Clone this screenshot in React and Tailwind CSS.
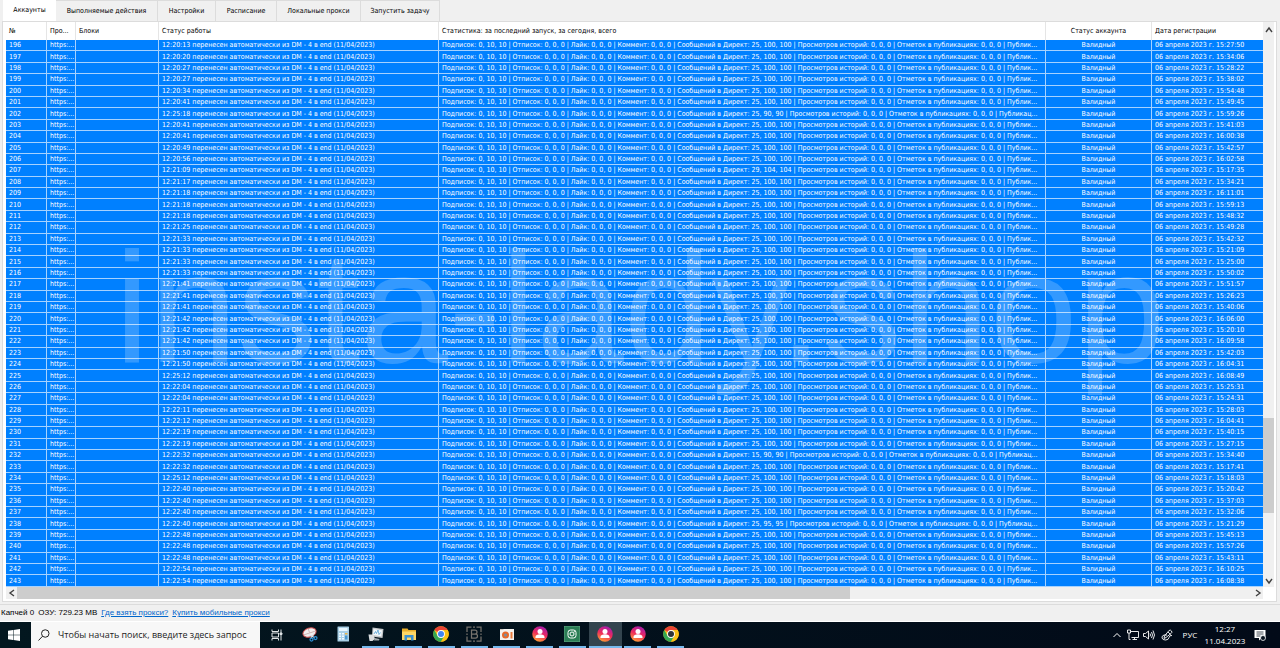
const TABS = [
  { label: 'Аккаунты', width: 'w-[53px]' },
  { label: 'Выполняемые действия', width: 'w-[102px]' },
  { label: 'Настройки', width: 'w-[58px]' },
  { label: 'Расписание', width: 'w-[61px]' },
  { label: 'Локальные прокси', width: 'w-[84px]' },
  { label: 'Запустить задачу', width: 'w-[79px]' }
];

const FIRST_ID = 196;

// [status time, registration time, messages counters]
const ACCOUNTS = [
  ['12:20:13', '15:27:50'],
  ['12:20:20', '15:34:06'],
  ['12:20:27', '15:28:22'],
  ['12:20:27', '15:38:02'],
  ['12:20:34', '15:54:48'],
  ['12:20:41', '15:49:45'],
  ['12:25:18', '15:59:26', '25, 90, 90'],
  ['12:20:41', '15:41:03'],
  ['12:20:41', '16:00:38'],
  ['12:20:49', '15:42:57'],
  ['12:20:56', '16:02:58'],
  ['12:21:09', '15:17:35', '29, 104, 104'],
  ['12:21:17', '15:34:21'],
  ['12:21:18', '16:11:01'],
  ['12:21:18', '15:59:13'],
  ['12:21:18', '15:48:32'],
  ['12:21:25', '15:49:28'],
  ['12:21:33', '15:42:32'],
  ['12:21:33', '15:21:09'],
  ['12:21:33', '15:25:00'],
  ['12:21:33', '15:50:02'],
  ['12:21:41', '15:51:57'],
  ['12:21:41', '15:26:23'],
  ['12:21:41', '15:40:06'],
  ['12:21:42', '16:06:00'],
  ['12:21:42', '15:20:10'],
  ['12:21:42', '16:09:58'],
  ['12:21:50', '15:42:03'],
  ['12:21:50', '16:04:31'],
  ['12:25:12', '16:08:49'],
  ['12:22:04', '15:25:31'],
  ['12:22:04', '15:24:31'],
  ['12:22:11', '15:28:03'],
  ['12:22:12', '16:04:41'],
  ['12:22:19', '15:40:15'],
  ['12:22:19', '15:27:15'],
  ['12:22:32', '15:34:40', '15, 90, 90'],
  ['12:22:32', '15:17:41'],
  ['12:25:12', '15:18:03'],
  ['12:22:40', '15:20:42'],
  ['12:22:40', '15:37:03'],
  ['12:22:40', '15:32:06'],
  ['12:22:40', '15:21:29', '25, 95, 95'],
  ['12:22:48', '15:45:13'],
  ['12:22:48', '15:57:26'],
  ['12:22:48', '15:43:11'],
  ['12:22:54', '16:10:25'],
  ['12:22:54', '16:08:38']
];

function statsText(messages = '25, 100, 100') {
  const tail = messages.length < 12 ? 'Публикац...' : 'Публик...';
  return `Подписок: 0, 10, 10 | Отписок: 0, 0, 0 | Лайк: 0, 0, 0 | Коммент: 0, 0, 0 | Сообщений в Директ: ${messages} | Просмотров историй: 0, 0, 0 | Отметок в публикациях: 0, 0, 0 | ${tail}`;
}

const CELL = 'border-r border-b border-[#a6d2ff] p-0 pl-[3px] overflow-hidden whitespace-nowrap';
const HEAD = 'border-r border-[#e5e5e5] p-0 pl-[3px] text-left font-normal overflow-hidden whitespace-nowrap';

function AccountsTable() {
  return (
    <table className="h-full w-full table-fixed border-separate border-spacing-0 leading-[10px]">
      <colgroup>
        <col className="w-[41px]" />
        <col className="w-[29px]" />
        <col className="w-[83px]" />
        <col className="w-[280px]" />
        <col />
        <col className="w-[106px]" />
        <col className="w-[111px]" />
      </colgroup>
      <thead>
        <tr className="h-[18px]">
          <th className={HEAD}>№</th>
          <th className={HEAD}>Про...</th>
          <th className={HEAD}>Блоки</th>
          <th className={HEAD}>Статус работы</th>
          <th className={HEAD}>Статистика: за последний запуск, за сегодня, всего</th>
          <th className="border-r border-[#e5e5e5] p-0 text-center font-normal">Статус аккаунта</th>
          <th className="p-0 pl-[3px] text-left font-normal">Дата регистрации</th>
        </tr>
      </thead>
      <tbody className="bg-[#0080ff] text-white">
        {ACCOUNTS.map(([time, registered, messages], i) => (
          <tr key={i}>
            <td className={CELL}>{FIRST_ID + i}</td>
            <td className={CELL}>https:...</td>
            <td className={CELL}></td>
            <td className={CELL}>{time} перенесен автоматически из DM - 4 в end (11/04/2023)</td>
            <td className={CELL}>{statsText(messages)}</td>
            <td className="border-r border-b border-[#a6d2ff] p-0 text-center">Валидный</td>
            <td className="border-b border-[#a6d2ff] p-0 pl-[3px] whitespace-nowrap">06 апреля 2023 г. {registered}</td>
          </tr>
        ))}
      </tbody>
    </table>
  );
}

function Arrow({ d }) {
  return (
    <svg viewBox="0 0 8 8" className="h-2 w-2" fill="none" stroke="#404040" strokeWidth="1.4">
      <path d={d} />
    </svg>
  );
}

function ChromeIcon({ center = '#4285f4' }) {
  return (
    <svg viewBox="0 0 32 32" className="h-4 w-4">
      <circle cx="16" cy="16" r="15.5" fill="#fbc116" />
      <path d="M16 16 2.6 8.2A15.5 15.5 0 0 1 29.4 8.2H16Z" fill="#ea4335" />
      <path d="M2.6 8.2A15.5 15.5 0 0 0 16 31.5L22.8 19.8 16 16 9.2 19.8Z" fill="#34a853" />
      <path d="M16 8.2h13.4A15.5 15.5 0 0 1 16 31.5l6.8-11.7Z" fill="#fbc116" />
      <circle cx="16" cy="16" r="7.8" fill="#fff" />
      <circle cx="16" cy="16" r="6" fill={center} />
    </svg>
  );
}

function PersonIcon({ id }) {
  return (
    <svg viewBox="0 0 32 32" className="h-4 w-4">
      <defs>
        <linearGradient id={id} x1="0.7" y1="0" x2="0.3" y2="1">
          <stop offset="0" stopColor="#a31bb0" />
          <stop offset="0.5" stopColor="#ee2a5c" />
          <stop offset="1" stopColor="#ffa033" />
        </linearGradient>
      </defs>
      <circle cx="16" cy="16" r="15.5" fill={`url(#${id})`} />
      <circle cx="16" cy="11" r="5" fill="#fff" />
      <path d="M7 24v-2c0-4 4-5.500 9-5.500s9 1.500 9 5.500v2Z" fill="#fff" />
    </svg>
  );
}

function SnipIcon() {
  return (
    <svg viewBox="0 0 32 32" className="h-4 w-4">
      <g transform="rotate(-18 15 13)">
        <ellipse cx="15" cy="13" rx="13.500" ry="9" fill="#f3eeee" stroke="#c94b4b" strokeWidth="2" />
        <path d="M3 14h23M15 5v8" stroke="#c3a5a5" strokeWidth="1.500" />
      </g>
      <path d="m13 17 12 6M25 14l-7 10" stroke="#d8e3ea" strokeWidth="2.500" />
      <circle cx="27" cy="24" r="3" fill="none" stroke="#2d8fd5" strokeWidth="2.500" />
      <circle cx="19" cy="27" r="3" fill="none" stroke="#2d8fd5" strokeWidth="2.500" />
    </svg>
  );
}

function CalcIcon() {
  return (
    <svg viewBox="0 0 32 32" className="h-4 w-4">
      <rect x="5" y="1" width="23" height="30" rx="1" fill="#a9cfe6" />
      <rect x="8" y="4" width="17" height="6" fill="#e8f7ff" />
      <path d="M8 14h4v3H8zm6 0h4v3h-4zM8 19h4v3H8zm6 0h4v3h-4zM8 24h4v3H8zm6 0h4v3h-4z" fill="#f1faff" />
      <path d="M20 14h5v3h-5z" fill="#e8b54a" />
      <path d="M20 19h5v8h-5z" fill="#4998d0" />
    </svg>
  );
}

function MonitorIcon() {
  return (
    <svg viewBox="0 0 32 32" className="h-4 w-4">
      <path d="M9 3 31 6l-2 18-21-3Z" fill="#c5c9cc" />
      <path d="m11 6 17 2.500-1.500 12L10 18Z" fill="#f2f8fb" />
      <path d="m12 16 3-5 2 4 3-7 2 9 3-4" fill="none" stroke="#4b9bd0" strokeWidth="1.500" />
      <path d="M1 17h10l3 9-5 4H3Z" fill="#dadddf" />
      <path d="m14 24 9 2-1 3H12Z" fill="#9ea6aa" />
    </svg>
  );
}

function FolderIcon() {
  return (
    <svg viewBox="0 0 32 32" className="h-4 w-4">
      <path d="M2 5h11l2 3h15v20H2Z" fill="#e9ae2b" />
      <path d="M2 11h28v17H2Z" fill="#ffd765" />
      <path d="M7 18h18v11h-5v-6h-8v6H7Z" fill="#3c91d0" />
    </svg>
  );
}

function BracketIcon() {
  return (
    <svg viewBox="0 0 32 32" className="h-4 w-4" fill="none" stroke="#77736d" strokeWidth="2.500">
      <path d="M2 12V2h9M14 2h4M21 2h9v10M30 15v3M30 21v9h-9M18 30h-4M11 30H2v-9M2 18v-3" />
      <path d="M11 8h7a4 4 0 0 1 0 8h-7Zm0 8h8a4 4 0 0 1 0 8h-8Z" />
    </svg>
  );
}

function RecorderIcon() {
  return (
    <svg viewBox="0 0 32 32" className="h-4 w-4">
      <path d="M2 6h28v22H2Z" fill="#f4f2ef" />
      <circle cx="13" cy="18" r="7" fill="#e76829" />
      <circle cx="13" cy="18" r="3" fill="#7a8fa0" />
      <path d="M23 12h4v13h-4Z" fill="#e87b3d" />
      <path d="M2 6h7v2H2Z" fill="#cfcac2" />
    </svg>
  );
}

function CameraIcon() {
  return (
    <svg viewBox="0 0 32 32" className="h-4 w-4" fill="none" stroke="#fff" strokeWidth="2">
      <path d="M0 0h32v32H0Z" fill="#2b7d55" stroke="#60a883" />
      <rect x="8" y="8" width="16" height="16" rx="5" />
      <circle cx="16" cy="16" r="4" />
      <circle cx="20.500" cy="11.500" r="0.500" />
    </svg>
  );
}

const APPS = [
  { name: 'Ножницы', icon: <SnipIcon /> },
  { name: 'Калькулятор', icon: <CalcIcon /> },
  { name: 'Монитор ресурсов', icon: <MonitorIcon />, running: true },
  { name: 'Проводник', icon: <FolderIcon />, running: true },
  { name: 'Chrome', icon: <ChromeIcon />, running: true },
  { name: 'Редактор', icon: <BracketIcon />, running: true },
  { name: 'Запись экрана', icon: <RecorderIcon />, running: true },
  { name: 'Аккаунты 1', icon: <PersonIcon id="person-1" />, running: true },
  { name: 'Камера', icon: <CameraIcon />, running: true },
  { name: 'Аккаунты 2', icon: <PersonIcon id="person-2" />, running: true, active: true },
  { name: 'Аккаунты 3', icon: <PersonIcon id="person-3" />, running: true },
  { name: 'Chrome 2', icon: <ChromeIcon center="#303438" />, running: true }
];

function Taskbar() {
  return (
    <footer className="flex h-[26px] shrink-0 items-stretch bg-linear-to-r from-[#03171f] to-[#020a18] font-['Open_Sans','Noto_Sans',sans-serif] text-white">
      <button type="button" aria-label="Пуск" className="flex w-[31px] items-center justify-center pr-1">
        <svg viewBox="0 0 24 24" className="h-3 w-3" fill="#fff">
          <path d="M0 3.500 10 2v9.500H0ZM11 1.900 24 0v11.500H11ZM0 12.500h10V22L0 20.500ZM11 12.500h13V24l-13-1.900Z" />
        </svg>
      </button>
      <label className="flex w-[229px] items-center gap-2 bg-[#f7f7f7] pl-[7px] text-[#222]">
        <svg viewBox="0 0 24 24" className="h-3 w-3 shrink-0" fill="none" stroke="#222" strokeWidth="2">
          <circle cx="14.500" cy="9" r="7.500" />
          <path d="M9 14.500 1 23" />
        </svg>
        <input
          aria-label="Поиск"
          placeholder="Чтобы начать поиск, введите здесь запрос"
          className="w-full min-w-0 bg-transparent text-[9px] outline-none placeholder:text-[#222]"
        />
      </label>
      <button type="button" aria-label="Представление задач" className="flex w-[34px] items-center justify-center">
        <svg viewBox="0 0 24 24" className="h-3 w-3" fill="none" stroke="#dfe4e6" strokeWidth="2">
          <path d="M2 1v4h13V1M2 23v-4h13v4M2 8h13v8H2ZM20 1v22" />
          <path d="M18 8h4v3h-4Z" fill="#dfe4e6" />
        </svg>
      </button>
      <nav className="flex w-[393px]">
        {APPS.map((app) => (
          <button
            key={app.name}
            type="button"
            aria-label={app.name}
            className={'flex flex-1 flex-col items-center ' + (app.active ? 'bg-[#33444e]' : '')}
          >
            <span className="flex flex-1 items-center">{app.icon}</span>
            <span
              className={
                'h-0.5 ' + (app.active ? 'w-full ' : 'w-[27px] ') + (app.running ? 'bg-[#76b9ed]' : '')
              }
            />
          </button>
        ))}
      </nav>
      <div className="ml-auto flex items-center">
        <button type="button" aria-label="Скрытые значки" className="flex w-4 justify-center">
          <svg viewBox="0 0 16 16" className="h-2 w-2" fill="none" stroke="#fff" strokeWidth="2">
            <path d="m1 12 7-7 7 7" />
          </svg>
        </button>
        <button type="button" aria-label="Сеть" className="flex w-4 justify-center">
          <svg viewBox="0 0 24 24" className="h-3 w-3" fill="none" stroke="#fff" strokeWidth="1.800">
            <path d="M8 5h15v12H9M1 2h6v6H1ZM4 8v13h3M11 21h9M15 17v4" />
          </svg>
        </button>
        <button type="button" aria-label="Громкость" className="flex w-4 justify-center">
          <svg viewBox="0 0 24 24" className="h-3 w-3" fill="none" stroke="#fff" strokeWidth="1.800">
            <path d="M1 9h4l6-5v16l-6-5H1ZM14 9q2 3 0 6M17 6q4 6 0 12M20 3q6 9 0 18" />
          </svg>
        </button>
        <button type="button" aria-label="Перо" className="flex w-5 justify-center">
          <svg viewBox="0 0 24 24" className="h-3 w-3" fill="none" stroke="#fff" strokeWidth="1.800">
            <path d="m7 14 9-11q3-2 5 1t-1 5L10 17l-4 2ZM14 6l5 5M12 12H6q-5 2-4 6t7 4 7-5 6-4" />
          </svg>
        </button>
        <button type="button" className="w-[26px] text-center text-[8px]">РУС</button>
        <time className="w-11 text-center text-[8px] leading-3">
          12:27
          <br />
          11.04.2023
        </time>
        <button type="button" aria-label="Уведомления" className="mr-[7px] flex w-[26px] justify-center">
          <svg viewBox="0 0 24 24" className="h-3 w-3">
            <path d="M1 2h22v16h-8l-5 5v-5H1Z" fill="#fff" />
            <path d="M5 6h14M5 10h14M5 14h8" stroke="#07121e" strokeWidth="1.500" />
            <circle cx="18" cy="18" r="5" fill="#07121e" stroke="#fff" strokeWidth="1.500" />
          </svg>
        </button>
      </div>
    </footer>
  );
}

export default function App() {
  return (
    <div className="flex h-screen flex-col overflow-hidden bg-[#f0f0f0] font-['DejaVu_Sans_Condensed',Roboto,sans-serif] text-[7px] text-black">
      <main className="relative flex min-h-0 flex-1 flex-col">
        <div role="tablist" className="flex h-[21px] shrink-0 pl-[3px]">
          {TABS.map((tab, i) => (
            <button
              key={tab.label}
              type="button"
              role="tab"
              aria-selected={i === 0}
              className={
                'whitespace-nowrap ' +
                tab.width +
                (i === 0 ? ' bg-white' : ' border-t border-r border-[#dcdcdc]')
              }
            >
              {tab.label}
            </button>
          ))}
        </div>

        <section className="mr-[3px] ml-0.5 flex min-h-0 flex-1 flex-col border border-[#dcdcdc] bg-white pr-0.5 pb-0.5 pl-[3px]">
          <div className="flex min-h-0 flex-1">
            <div className="min-w-0 flex-1">
              <AccountsTable />
            </div>
            <div className="flex w-[11px] flex-col items-center bg-[#f0f0f0]">
              <button type="button" aria-label="Вверх" className="flex h-4 items-center">
                <Arrow d="m1 6 3-4 3 4" />
              </button>
              <div className="flex-[380]" />
              <div className="w-full flex-[95] bg-[#cdcdcd]" />
              <div className="flex-[62]" />
              <button type="button" aria-label="Вниз" className="flex h-3 items-center">
                <Arrow d="m1 2 3 4 3-4" />
              </button>
            </div>
          </div>
          <div className="mr-[11px] flex h-3 items-center bg-[#f0f0f0]">
            <button type="button" aria-label="Влево" className="flex w-[11px] justify-center">
              <Arrow d="M6 1 2 4l4 3" />
            </button>
            <div className="h-full flex-[833] bg-[#cdcdcd]" />
            <div className="flex-[402]" />
            <button type="button" aria-label="Вправо" className="flex w-[11px] justify-center">
              <Arrow d="m2 1 4 3-4 3" />
            </button>
          </div>
        </section>

        <div className="mt-0.5 flex h-[18px] shrink-0 items-center gap-1 border-y border-t-[#dcdcdc] border-b-white pl-px font-['Liberation_Sans',sans-serif] text-[8px]">
          <span>Капчей 0</span>
          <span>ОЗУ: 729.23 MB</span>
          <a href="#proxy" className="text-[#0066cc] underline">Где взять прокси?</a>
          <a href="#mobile" className="text-[#0066cc] underline">Купить мобильные прокси</a>
        </div>

        <div className="pointer-events-none absolute inset-0 flex items-center justify-center pb-2 font-['Liberation_Sans',sans-serif] text-[158px] leading-none text-white/20">
          insta-lady.shop
        </div>
      </main>
      <Taskbar />
    </div>
  );
}
